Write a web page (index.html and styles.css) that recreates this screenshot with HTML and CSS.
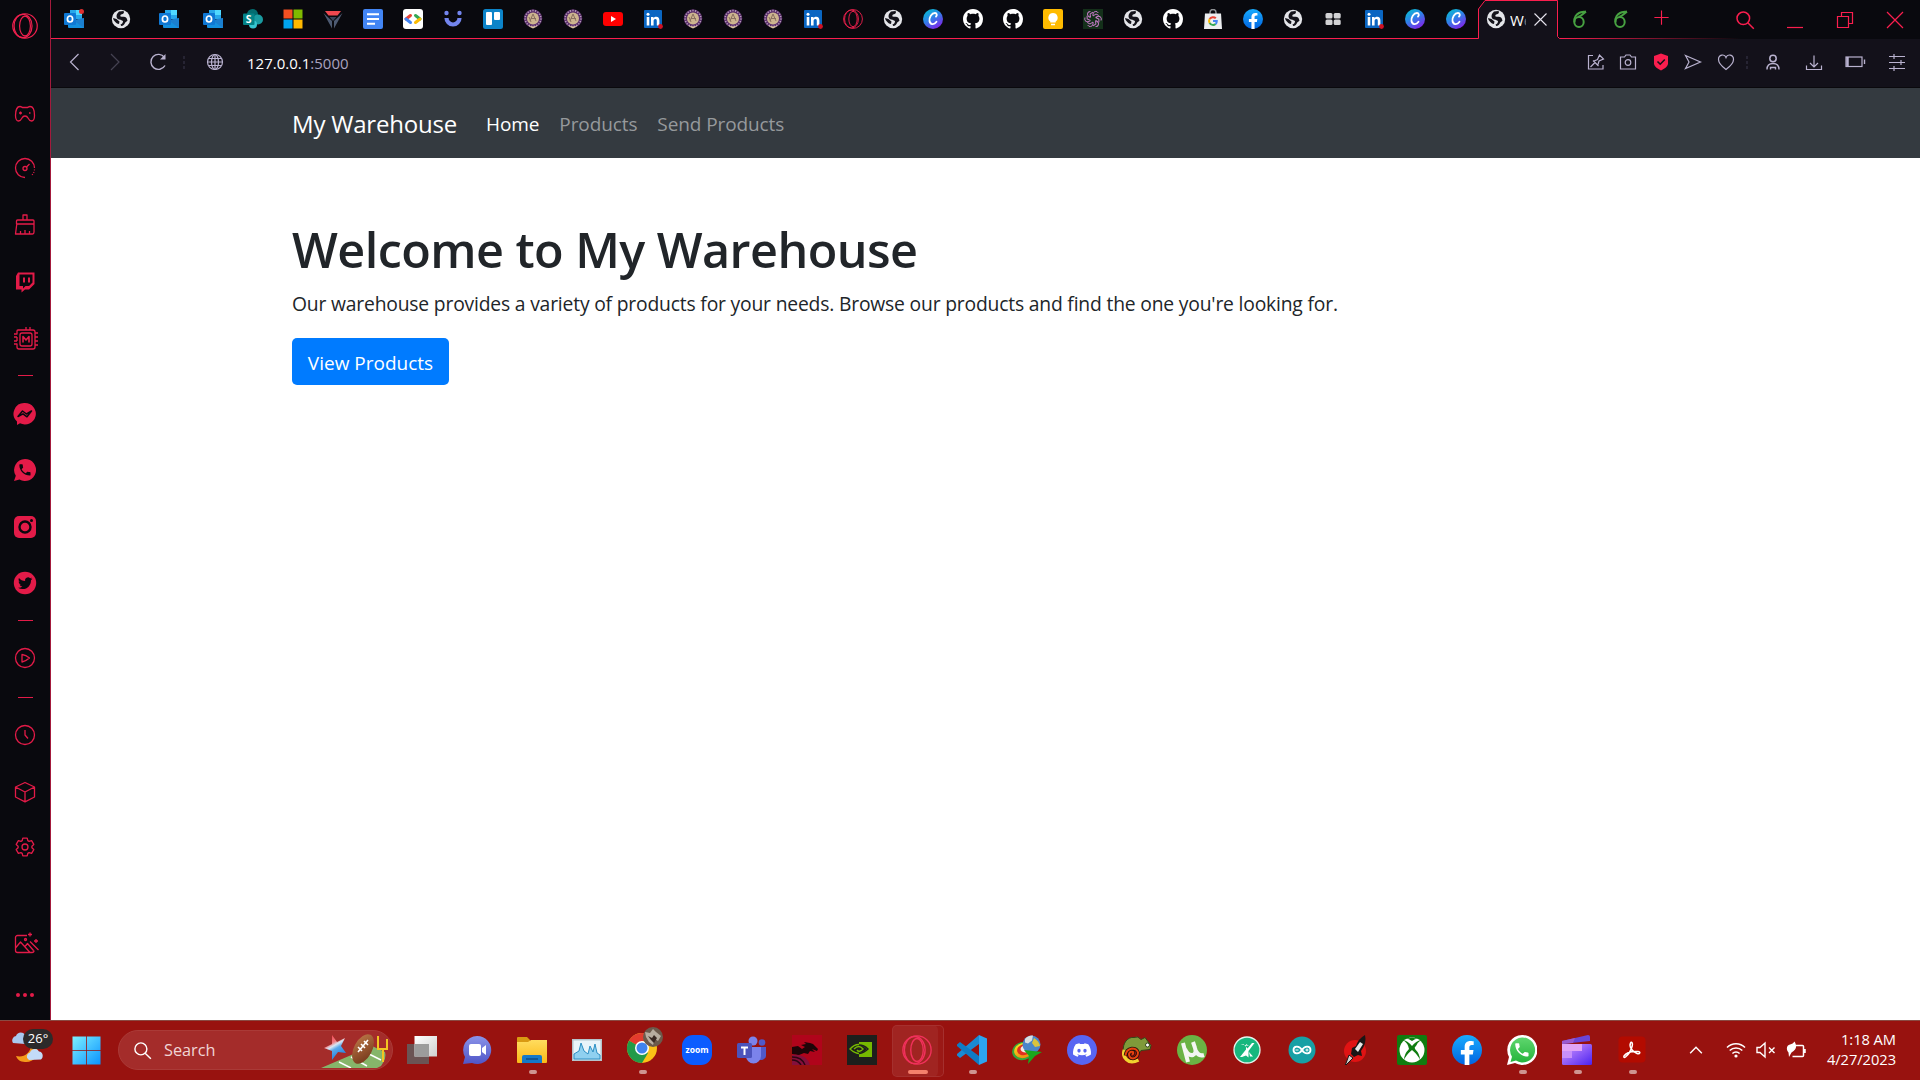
FILE: index.html
```html
<!DOCTYPE html>
<html lang="en">
<head>
<meta charset="utf-8">
<title>My Warehouse</title>
<link rel="stylesheet" href="styles.css">
</head>
<body>
<svg class="sprite" aria-hidden="true">
  <defs>
    <linearGradient id="g-canva" x1="0" y1="0" x2=".6" y2="1"><stop offset="0" stop-color="#00c9cc"/><stop offset=".5" stop-color="#2b86e8"/><stop offset="1" stop-color="#7a2be8"/></linearGradient>
    <linearGradient id="g-fb" x1="0" y1="0" x2="0" y2="1"><stop offset="0" stop-color="#18acfe"/><stop offset="1" stop-color="#0163e0"/></linearGradient>
    <linearGradient id="g-win" x1="0" y1="0" x2="1" y2="1"><stop offset="0" stop-color="#7df0ff"/><stop offset="1" stop-color="#0a93ff"/></linearGradient>
    <linearGradient id="g-chat" x1="0" y1="0" x2="0" y2="1"><stop offset="0" stop-color="#8a93e8"/><stop offset="1" stop-color="#4f55c8"/></linearGradient>
    <linearGradient id="g-fold" x1="0" y1="0" x2="0" y2="1"><stop offset="0" stop-color="#ffdc5e"/><stop offset="1" stop-color="#fbb917"/></linearGradient>
    <linearGradient id="g-view" x1="0" y1="0" x2="1" y2="1"><stop offset="0" stop-color="#fff"/><stop offset="1" stop-color="#cfcfcf"/></linearGradient>
    <linearGradient id="g-clip" x1="0" y1="0" x2="1" y2="1"><stop offset="0" stop-color="#d79bff"/><stop offset="1" stop-color="#4b22f0"/></linearGradient>
    <linearGradient id="g-wa" x1="0" y1="0" x2="0" y2="1"><stop offset="0" stop-color="#5fd66e"/><stop offset="1" stop-color="#25b43c"/></linearGradient>
    <linearGradient id="g-ball" x1="0" y1="0" x2="1" y2="1"><stop offset="0" stop-color="#c07a4a"/><stop offset="1" stop-color="#6e3316"/></linearGradient>
    <linearGradient id="g-star" x1="0" y1="0" x2=".5" y2="1"><stop offset="0" stop-color="#f0303c"/><stop offset=".4" stop-color="#f07a80"/><stop offset=".52" stop-color="#d8e6f2"/><stop offset=".65" stop-color="#5aa8ea"/><stop offset="1" stop-color="#2080e0"/></linearGradient>
    <linearGradient id="g-rain" x1="0" y1="0" x2="0" y2="1"><stop offset="0" stop-color="#f7e11c"/><stop offset="1" stop-color="#f08a12"/></linearGradient>
  </defs>

  <symbol id="outlook" viewBox="0 0 20 20"><path d="M6 1h12v9H6z" fill="#28a8ea"/><path d="M12 1h6v5h-6z" fill="#50d9ff"/><path d="M6 6h6v5H6z" fill="#0364b8"/><path d="M4 9l8 4 8-4v10H5a1 1 0 0 1-1-1z" fill="#1490df"/><path d="M20 9v10L9 11z" fill="#1b7fcf"/><rect y="4" width="12" height="12" rx="1" fill="#0f78d4"/><ellipse cx="6" cy="10" rx="2.600" ry="3" fill="none" stroke="#fff" stroke-width="1.700"/></symbol>
  <symbol id="world" viewBox="0 0 20 20"><circle cx="10" cy="10" r="9.200" fill="#e4e5e9"/><path d="M8 2.500l4.500-.5c1 1.500.3 3-1.500 3.300-1.500.3-2 1.200-1.500 2.200 1.500.5 4.500-.2 6 1.500l1 2.500c-.7 1.200-2 1.300-2.500 2.500-.5 1.500-1.800 3-3.800 3l-.7-1.500c1.700-.5 2.500-1.800 2.500-3.500l-2.500-1.200c-2-.3-3.800-1-4-3.300C5.500 5.500 6.500 4 8 2.500z" fill="#14131a"/><path d="M2 9l3.500 1 3 2.500-.5 2.500-2-.5C4.500 13 2.500 12 2 9z" fill="#14131a"/></symbol>
  <symbol id="sharepoint" viewBox="0 0 20 20"><circle cx="9.500" cy="5.500" r="5.500" fill="#036c70"/><circle cx="15" cy="10.500" r="5" fill="#1a9ba1"/><circle cx="10" cy="15.500" r="4" fill="#37c6d0"/><rect y="4.500" width="11.500" height="11.500" rx="1" fill="#038387"/><text x="5.700" y="14" text-anchor="middle" class="glyph" font-size="10.500" fill="#fff">S</text></symbol>
  <symbol id="microsoft" viewBox="0 0 20 20"><path d="M.5.500h9v9h-9z" fill="#f25022"/><path d="M10.500.500h9v9h-9z" fill="#7fba00"/><path d="M.5 10.500h9v9h-9z" fill="#00a4ef"/><path d="M10.500 10.500h9v9h-9z" fill="#ffb900"/></symbol>
  <symbol id="vee" viewBox="0 0 20 20"><path d="M2 2h16l-3.500 4.500h-9z" fill="#f0484f"/><path d="M.5 4l8.500 8v7.500zM19.500 4L11 12v7.500z" fill="#4d5a72"/><path d="M6.500 8h7L10 12z" fill="#39445a"/></symbol>
  <symbol id="docs" viewBox="0 0 20 20"><rect width="20" height="20" rx="2" fill="#4285f4"/><path d="M4 5.200h12M4 10h12M4 14.800h8" stroke="#fff" stroke-width="2"/></symbol>
  <symbol id="gdev" viewBox="0 0 20 20"><rect width="20" height="20" rx="3" fill="#fff"/><g fill="none" stroke-width="3" stroke-linecap="round"><path d="M7.500 6.500L3 10" stroke="#ea4335"/><path d="M3 10l4.500 3.500" stroke="#4285f4"/><path d="M12.500 6.500L17 10" stroke="#34a853"/><path d="M17 10l-4.500 3.500" stroke="#fbbc04"/></g></symbol>
  <symbol id="ucup" viewBox="0 0 20 20"><path d="M3.500 9a6.500 6.500 0 0 0 13 0" fill="none" stroke="#7385ee" stroke-width="4.200"/><circle cx="3.500" cy="4" r="2.200" fill="#7385ee"/><circle cx="16.500" cy="4" r="2.200" fill="#7385ee"/></symbol>
  <symbol id="trello" viewBox="0 0 20 20"><rect width="20" height="20" rx="2.500" fill="#0c84c9"/><rect x="3" y="3" width="6" height="13" rx="1" fill="#fff"/><rect x="11" y="3" width="6" height="8" rx="1" fill="#fff"/></symbol>
  <symbol id="seal" viewBox="0 0 20 20"><circle cx="10" cy="9.500" r="9.200" fill="#5b2f6c"/><circle cx="10" cy="9.500" r="7.900" fill="none" stroke="#b9a3bd" stroke-width="1.500" stroke-dasharray="1.200 1.400"/><circle cx="10" cy="9.500" r="6" fill="#cdb58f"/><path d="M7 12l3-7 3 7M8 9.500h5M6 8l2 5" fill="none" stroke="#8a7060"/><path d="M5 16q5 3 10 0l-2 2-3 1.500L7 18z" fill="#dcc79d"/></symbol>
  <symbol id="youtube" viewBox="0 0 20 20"><rect y="3" width="20" height="14" rx="3" fill="#f00"/><path d="M8 7v6l5-3z" fill="#fff"/></symbol>
  <symbol id="linkedin" viewBox="0 0 20 20"><rect x="1" y="1" width="18" height="18" rx="1" fill="#0a66c2"/><path d="M3.700 8h2.600v8.500H3.700zM8 8h2.500v1.200C11.200 8.200 12.200 7.800 13.200 7.800c2.300 0 3.200 1.400 3.200 3.900v4.800h-2.600V12c0-1.200-.3-2-1.400-2-1.200 0-1.800.8-1.800 2v4.500H8z" fill="#fff"/><circle cx="5" cy="5.200" r="1.500" fill="#fff"/><circle cx="17.500" cy="17.500" r="2.400" fill="#d11124"/></symbol>
  <symbol id="opera" viewBox="0 0 24 24"><g fill="none" stroke="#f0204e" stroke-width="1.100"><circle cx="12" cy="12" r="11.300"/><ellipse cx="10.200" cy="12" rx="8.300" ry="10.800"/><ellipse cx="12" cy="12" rx="5" ry="9.200"/></g></symbol>
  <symbol id="canva" viewBox="0 0 20 20"><circle cx="10" cy="10" r="10" fill="url(#g-canva)"/><path d="M13 7.500c1.500-1.500.8-3.500-1-3.500C8.500 4 6 8.500 6.500 12c.5 3.500 4.500 4.300 7 .8" fill="none" stroke="#fff" stroke-width="1.800" stroke-linecap="round"/></symbol>
  <symbol id="github" viewBox="0 0 16 16"><path fill="#fff" d="M8 0C3.580 0 0 3.580 0 8c0 3.540 2.290 6.530 5.470 7.590.4.070.55-.17.55-.38 0-.19-.01-.82-.01-1.490-2.010.37-2.530-.49-2.690-.94-.09-.23-.48-.94-.82-1.130-.28-.15-.68-.52-.01-.53.63-.01 1.080.58 1.230.82.72 1.210 1.870.87 2.330.66.07-.52.28-.87.51-1.070-1.780-.2-3.640-.89-3.640-3.950 0-.87.31-1.590.82-2.150-.08-.2-.36-1.020.08-2.120 0 0 .67-.21 2.200.82.64-.18 1.320-.27 2-.27.68 0 1.360.09 2 .27 1.530-1.040 2.200-.82 2.200-.82.44 1.100.16 1.920.08 2.120.51.56.82 1.270.82 2.150 0 3.070-1.870 3.750-3.650 3.950.29.25.54.73.54 1.480 0 1.070-.01 1.930-.01 2.200 0 .21.15.46.55.38A8.013 8.013 0 0 0 16 8c0-4.420-3.580-8-8-8z"/></symbol>
  <symbol id="keep" viewBox="0 0 20 20"><rect width="20" height="20" rx="2" fill="#fb0"/><path d="M10 4a4.700 4.700 0 0 0-2.700 8.500V13.500h5.400v-1A4.700 4.700 0 0 0 10 4zM8 14.700h4v1.500H8z" fill="#fff"/></symbol>
  <symbol id="gpt" viewBox="0 0 20 20"><path d="M0 0h20v20H0z" fill="#14301a"/><g fill="none" stroke="#c77bc9" stroke-width="1"><path id="petal" d="M10 7V5a2.800 2.800 0 0 1 5.300-1M10 7l3-2 2.800 1.500"/><use href="#petal" transform="rotate(60 10 10)"/><use href="#petal" transform="rotate(120 10 10)"/><use href="#petal" transform="rotate(180 10 10)"/><use href="#petal" transform="rotate(240 10 10)"/><use href="#petal" transform="rotate(300 10 10)"/></g></symbol>
  <symbol id="shop" viewBox="0 0 20 20"><path d="M7 5V3.500a3 3 0 0 1 6 0V5" fill="none" stroke="#8e9195" stroke-width="1.500"/><path d="M2 4.500h16l1 15.500H1z" fill="#eceef0"/><g fill="none" stroke-width="2"><path d="M12.800 9.300A4 4 0 0 0 6.600 10" stroke="#ea4335"/><path d="M6.600 10a4 4 0 0 0 0 4" stroke="#fbbc04"/><path d="M6.600 14a4 4 0 0 0 6 1" stroke="#34a853"/><path d="M12.600 15a4 4 0 0 0 1.200-3H10" stroke="#4285f4"/></g></symbol>
  <symbol id="facebook" viewBox="0 0 24 24"><circle cx="12" cy="12" r="12" fill="url(#g-fb)"/><path fill="#fff" d="M16.671 15.543l.532-3.470h-3.328v-2.250c0-.949.465-1.874 1.956-1.874h1.513V4.996s-1.374-.235-2.686-.235c-2.741 0-4.533 1.662-4.533 4.669v2.643H7.078v3.470h3.047V24h3.750v-8.457z"/></symbol>
  <symbol id="grid" viewBox="0 0 20 20"><g fill="#d2d2d4"><rect x="2.500" y="4" width="7" height="5.500" rx="1.500"/><rect x="10.700" y="4" width="7" height="5.500" rx="1.500"/><rect x="2.500" y="10.500" width="7" height="5.500" rx="1.500"/><rect x="10.700" y="10.500" width="7" height="5.500" rx="1.500"/></g></symbol>
  <symbol id="overleaf" viewBox="0 0 20 20"><g fill="none" stroke="#47a141" stroke-width="2"><ellipse cx="9" cy="13" rx="4.700" ry="5"/><path d="M4.500 13C3.500 8 7 5 9 4c2-1 4-1 7-1.500M8 8c3-1 5-3 8-5.500"/></g></symbol>

  <symbol id="pad" viewBox="0 0 24 24"><path d="M7 4.500c1.500 0 2 1 3 1h4c1 0 1.500-1 3-1 3 0 4.500 4 4.500 9 0 4-1.500 5.500-3 5.500s-2.500-1-3.500-3c-.7-1.400-1.500-2-3-2s-2.300.6-3 2c-1 2-2 3-3.500 3s-3-1.500-3-5.500c0-5 1.500-9 4.500-9z"/><path d="M6 11h3M7.500 9.500v3M16 11h1.500"/></symbol>
  <symbol id="speed" viewBox="0 0 24 24"><path d="M12 21.500A9.500 9.500 0 1 1 21.500 12"/><path d="M21.500 13.500c-.2 2-1 4-2.500 5.500" stroke-dasharray="1 1.500"/><circle cx="12" cy="12.500" r="2"/><path d="M13.500 11l3-3"/></symbol>
  <symbol id="broom" viewBox="0 0 24 24"><path d="M10 7V2h4v5M4.500 7h15.500a1 1 0 0 1 1 1v3H3.500V8a1 1 0 0 1 1-1zM3.800 11L2.500 21H19.500q1.500 0 1.500-2V11M7.500 21v-3M12 21v-4M16.500 21v-3"/></symbol>
  <symbol id="twitch" viewBox="0 0 24 24"><path class="solid" fill-rule="evenodd" d="M3 6l2-3.500h16.500V14L16 19.500h-4L8.500 22.500V19.500H3zM6.500 4.500V16H10v2.500L12.500 16H16l3.500-3.500v-8zM10 7.500h2v5h-2zM15 7.500h2v5h-2z"/></symbol>
  <symbol id="chip" viewBox="0 0 26 26"><path d="M5 4h15a2 2 0 0 1 2 2v15a2 2 0 0 1-2 2H6a2 2 0 0 1-2-2V18H1M4 15V11M1 8h3V5a1 1 0 0 1 1-1M1 11h3M13 4V1M17 4V1M22 7h3M22 11h3M22 15h3M22 19h3M1 15h3"/><rect x="7" y="7" width="12" height="13" rx="2"/><path d="M10 16.500v-6l3 3.500 3-3.500v6" stroke-width="1.600"/></symbol>
  <symbol id="messenger" viewBox="0 0 24 24"><path class="solid" d="M12 1a11 10.700 0 1 1-5 20.300L4 23v-3.500A10.700 10.700 0 0 1 12 1z"/><path class="cut" d="M5 14.500l4.500-5.500 4 3L18.500 9 14 14.800l-4-3z" stroke-width="1.500"/></symbol>
  <symbol id="whats" viewBox="0 0 24 24"><path class="solid" d="M12 1a11 11 0 1 1-5.500 20.500L1 23l1.800-5.200A11 11 0 0 1 12 1z"/><path class="cutfill" transform="translate(4.500 4.500) scale(.62)" d="M6.620 10.790c1.440 2.830 3.760 5.140 6.590 6.590l2.200-2.200c.27-.27.67-.36 1.020-.24 1.120.37 2.330.57 3.570.57.55 0 1 .45 1 1V20c0 .55-.45 1-1 1-9.390 0-17-7.610-17-17 0-.55.45-1 1-1h3.500c.55 0 1 .45 1 1 0 1.250.2 2.450.57 3.570.11.35.03.74-.25 1.020z"/></symbol>
  <symbol id="insta" viewBox="0 0 24 24"><rect class="solid" x="1" y="1" width="22" height="22" rx="5"/><circle class="cut" cx="12" cy="12" r="5.500" stroke-width="2.400"/><circle class="cutfill" cx="18.500" cy="5.500" r="1.500"/></symbol>
  <symbol id="twitter" viewBox="0 0 24 24"><circle class="solid" cx="12" cy="12" r="11.200"/><path class="cutfill" transform="translate(5 5) scale(.6)" d="M23.953 4.570a10 10 0 0 1-2.825.775 4.958 4.958 0 0 0 2.163-2.723c-.951.555-2.005.959-3.127 1.184a4.920 4.920 0 0 0-8.384 4.482C7.690 8.095 4.067 6.130 1.640 3.162a4.822 4.822 0 0 0-.666 2.475c0 1.710.87 3.213 2.188 4.096a4.904 4.904 0 0 1-2.228-.616v.06a4.923 4.923 0 0 0 3.946 4.827 4.996 4.996 0 0 1-2.212.085 4.936 4.936 0 0 0 4.604 3.417 9.867 9.867 0 0 1-6.102 2.105c-.39 0-.779-.023-1.170-.067a13.995 13.995 0 0 0 7.557 2.209c9.053 0 13.998-7.496 13.998-13.985 0-.21 0-.42-.015-.63A9.935 9.935 0 0 0 24 4.590z"/></symbol>
  <symbol id="play" viewBox="0 0 24 24"><circle cx="12" cy="12" r="9.500"/><path d="M9 8.500v7.500q4-1 7.500-4Q13 9 9 8.500z"/></symbol>
  <symbol id="clock" viewBox="0 0 24 24"><circle cx="12" cy="12" r="9.500"/><path d="M12 7v5l3 3.500"/></symbol>
  <symbol id="cube" viewBox="0 0 24 24"><path d="M12 2.500L21.500 7v10L12 21.800 2.500 17V7zM2.500 7l9.500 5 9.500-5M12 12v9.500"/></symbol>
  <symbol id="gear" viewBox="0 0 24 24"><path d="M9.200 5.600L9.800 3.100H14.200L14.800 5.600L16.100 6.400L18.600 5.650L20.800 9.450L18.900 11.200V12.800L20.800 14.550L18.600 18.350L16.100 17.600L14.800 18.400L14.200 20.900H9.800L9.200 18.400L7.900 17.600L5.400 18.350L3.200 14.550L5.100 12.800V11.200L3.200 9.450L5.400 5.650L7.900 6.400Z"/><circle cx="12" cy="12" r="3"/></symbol>
  <symbol id="wallpaper" viewBox="0 0 26 26"><path d="M14 4.500H4.500a2 2 0 0 0-2 2v13a2 2 0 0 0 2 2H19a2 2 0 0 0 2-2M2.500 17l5-6 9.500 10.500M12 15.500l2.500-3 6 7M17 10.500l8.500 8.500"/><circle cx="12.500" cy="8.500" r="1"/><path d="M17 1.500v4M15 3.500h4M23 8v4M21 10h4"/></symbol>
  <symbol id="dots" viewBox="0 0 24 24"><g class="solid"><circle cx="5" cy="12" r="2"/><circle cx="12" cy="12" r="2"/><circle cx="19" cy="12" r="2"/></g></symbol>

  <symbol id="back" viewBox="0 0 20 20"><path d="M13.500 2L5.500 10l8 8"/></symbol>
  <symbol id="fwd" viewBox="0 0 20 20"><path d="M6 2l8 8-8 8"/></symbol>
  <symbol id="reload" viewBox="0 0 20 20"><path d="M16.500 5.500A7.500 7.500 0 1 0 17 13.500" stroke-width="1.400"/><path class="solid" d="M17.500 2v5.500H12z"/></symbol>
  <symbol id="globe" viewBox="0 0 20 20"><circle cx="10" cy="10" r="7.500"/><ellipse cx="10" cy="10" rx="3.500" ry="7.500"/><path d="M10 2.500v15M3.500 6.500h13M3.500 13.500h13M2.500 10h15"/></symbol>
  <symbol id="pinedit" viewBox="0 0 20 20"><path d="M7 3.500H2.500v13.500H17V13M4.500 15l4.500-4.500M7 8.500l5.500 5.500M8 9l3.500-1.500L13.500 3l4 4-4.500 2-1 3.500"/></symbol>
  <symbol id="camera" viewBox="0 0 20 20"><path d="M2.500 5h4L8 3h4l1.500 2h4v12h-15z"/><circle cx="10" cy="10.500" r="2.800"/></symbol>
  <symbol id="shield" viewBox="0 0 20 20"><path d="M10 1.500l7 2.500v7.500c0 3-3.500 5-7 7-3.500-2-7-4-7-7V4z" fill="#fa1e4e" stroke="none"/><path d="M6.500 9.500l2.700 2.700 4.600-4.700" stroke="#13111a" stroke-width="1.600"/></symbol>
  <symbol id="send" viewBox="0 0 20 20"><path d="M2.500 3.500L17.500 10l-15 6.500L6 10z"/></symbol>
  <symbol id="heart" viewBox="0 0 20 20"><path d="M10 17.500C6 14.500 2.500 11.500 2.500 7.500c0-5 6-6 7.500-2 1.500-4 7.500-3 7.500 2 0 4-3.500 7-7.500 10z"/></symbol>
  <symbol id="user" viewBox="0 0 20 20"><circle cx="10" cy="6.500" r="3.200" stroke-width="1.500"/><path d="M4 17.500c0-4 2-6 6-6s6 2 6 6M7.500 17.500V15.500h5v2" stroke-width="1.400"/></symbol>
  <symbol id="download" viewBox="0 0 20 20"><path d="M10 3.500V15M6 11l4 4 4-4M2.500 13.500v4h15v-4"/></symbol>
  <symbol id="battery" viewBox="0 0 22 20"><rect x="2" y="5" width="16" height="9.500"/><path d="M3.500 5v9.500" stroke-width="2.500"/><path d="M20.500 7.500v4.500" stroke-width="1.400"/></symbol>
  <symbol id="sliders" viewBox="0 0 20 20"><path d="M2 4.500h16M2 10.500h16M2 16.500h16M7 2v5M14 8v5M7 14v5"/></symbol>
  <symbol id="plus" viewBox="0 0 20 20"><path d="M10 2.500v15M2.500 10h15"/></symbol>
  <symbol id="cross" viewBox="0 0 20 20"><path d="M2 2l16 16M18 2L2 18"/></symbol>
  <symbol id="search" viewBox="0 0 20 20"><circle cx="8.300" cy="8.300" r="6.300" stroke-width="1.500"/><path d="M12.800 12.800l6 6" stroke-width="1.500"/></symbol>
  <symbol id="minim" viewBox="0 0 20 20"><path d="M2 17.500h16"/></symbol>
  <symbol id="restore" viewBox="0 0 20 20"><path d="M2.500 6.500h11v11h-11zM6.500 6.500V2.500h11v11h-4"/></symbol>

  <symbol id="t-weather" viewBox="0 0 34 34"><path d="M1 14a4.500 4.500 0 0 1 3-7c1-4 7-5 9-1v9z" fill="#a9c8ef"/><path d="M25 20c3 6-4 14-12 13-5 0-8-3-9-6 8 2 14-3 15-10 3 0 5 1 6 3z" fill="#f59a1b"/><path d="M17 31a4 4 0 0 1 1-7.500c1-4 7-5 9-1 4 0 5 6 2 8z" fill="#c3dbf8"/></symbol>
  <symbol id="t-start" viewBox="0 0 30 30"><path d="M.5.500h14.200v14.200H.5zM15.500.500h14v14.200h-14zM.5 15.500h14.200v14H.5zM15.500 15.500h14v14h-14z" fill="url(#g-win)"/></symbol>
  <symbol id="t-game" viewBox="0 0 68 36"><path d="M0 36l42-18 9-4 13 6q2 6-4 14l-4 2z" fill="#86b56a"/><path d="M18 30l12 6M30 25l16 9M42 19l18 9" stroke="#fff" stroke-width="1.500"/><path d="M11 3l5 7 8-4-4 8 5 7-8-1-6 8v-9l-8-3 8-4z" fill="url(#g-star)"/><ellipse cx="42" cy="17" rx="9" ry="16" transform="rotate(28 42 17)" fill="url(#g-ball)"/><path d="M37 20l10-12M37 15l4 4M40 12l4 4M43 9l4 4" stroke="#fff" stroke-width="1.600"/><path d="M57 4v13h9V7M62 17v13" fill="none" stroke="#f2c522" stroke-width="2"/></symbol>
  <symbol id="t-view" viewBox="0 0 30 30"><path d="M0 9h22v20H0z" fill="#6b5454"/><path d="M7.500 1H30v20.500H7.500z" fill="url(#g-view)"/><path d="M7.500 9H22v12.500H7.500z" fill="#9c9c9c"/></symbol>
  <symbol id="t-chat" viewBox="0 0 30 30"><path d="M15 1a14 14 0 1 1-5 27L1 29l2-7A14 14 0 0 1 15 1z" fill="url(#g-chat)"/><rect x="7" y="9" width="12" height="12" rx="2" fill="#fff"/><path d="M20 13l4-3v10l-4-3z" fill="#fff"/></symbol>
  <symbol id="t-folder" viewBox="0 0 30 30"><path d="M0 3a1 1 0 0 1 1-1h9l3 3v6H0z" fill="#d99a12"/><path d="M0 7h11l3-2h16v22a1 1 0 0 1-1 1H1a1 1 0 0 1-1-1z" fill="url(#g-fold)"/><path d="M5 28v-6a2 2 0 0 1 2-2h16a2 2 0 0 1 2 2v6z" fill="#1479c9"/><path d="M9 24h12" stroke="#0b4b86" stroke-width="1.500"/></symbol>
  <symbol id="t-monitor" viewBox="0 0 30 30"><path d="M0 4h30v22H0z" fill="#b5c3cb"/><path d="M1.500 5.500h27v19h-27z" fill="#e9f4fa"/><path d="M2 19l5-3 2-8 3 8 4 3 2-8 3 6 2-8 2 9 3 2v4H2z" fill="#8fd0f0" stroke="#2c8fc4"/></symbol>
  <symbol id="t-chrome" viewBox="0 0 38 38"><circle cx="16" cy="21" r="15" fill="#fbc116"/><path d="M16 21L3 13.500A15 15 0 0 1 29 13.500z" fill="#e33b2e"/><path d="M16 21L3 13.500A15 15 0 0 0 16 36l6-10z" fill="#229a48"/><path d="M16 14h13.500L22 24z" fill="#fbc116"/><path d="M3 13.500h13v7z" fill="#e33b2e"/><circle cx="16" cy="21" r="7" fill="#fff"/><circle cx="16" cy="21" r="5.500" fill="#3f83ee"/><circle cx="27" cy="10" r="10" fill="#6c5a4c"/><path d="M19 5l5 1 3-4 3 3 5 4-3 5-3-2-2 6-4-3-3-5z" fill="#b8ada0"/><path d="M22 9l4 2 2-3 3 3-3 5-3-3z" fill="#3a2a24"/></symbol>
  <symbol id="t-zoom" viewBox="0 0 30 30"><rect width="30" height="30" rx="11" fill="#0b5cff"/><text x="15" y="18" text-anchor="middle" class="glyph" font-size="8.500" fill="#fff">zoom</text></symbol>
  <symbol id="t-teams" viewBox="0 0 30 30"><circle cx="16" cy="6" r="4.500" fill="#7b83eb"/><circle cx="25" cy="7.500" r="3.300" fill="#5059c9"/><path d="M19 12h10v9a5 5 0 0 1-8 3z" fill="#5059c9"/><path d="M9 12h15v9a7.500 7.500 0 0 1-15 0z" fill="#7b83eb"/><rect y="8" width="15" height="15" rx="1.500" fill="#4b53bc"/><path d="M4 12.500h7M7.500 12.500V20" stroke="#fff" stroke-width="2"/></symbol>
  <symbol id="t-dragon" viewBox="0 0 30 30"><path d="M0 0h30v30H0z" fill="#b0041b"/><path d="M0 12l6-1 4 3 3-2-4-2 5-1-2-2 6 1 3 1 5 5-1 2-5-2 3 3-5-1-2 3-4-1-5 2-7-1z" fill="#1d0508"/><path d="M0 20q14-2 18 10H0z" fill="#84103c"/><path d="M0 22q10 0 13 8M0 25q6 0 9 5" fill="none" stroke="#2a0612" stroke-width="1.500"/></symbol>
  <symbol id="t-nvidia" viewBox="0 0 30 30"><path d="M0 0h30v30H0z" fill="#1d1f1c"/><path d="M12 7h13v15H12z" fill="#76b900"/><path d="M3 14q8-9 18 0-8 9-18 0z" fill="#1d1f1c" stroke="#76b900" stroke-width="1.400"/><path d="M7 14q5-5 9 0-4 4-6 1" fill="none" stroke="#76b900" stroke-width="1.400"/><path d="M12 10q5 0 9 4-4 4-9 4.500" fill="none" stroke="#1d1f1c" stroke-width="1.400"/></symbol>
  <symbol id="t-vscode" viewBox="0 0 30 30"><path d="M22 0v9L3 23 0 20.500V19z" fill="#1b8ad3"/><path d="M22 30v-9L3 7 0 9.500V11z" fill="#0f7bc4"/><path d="M22 0l8 3.500v23L22 30z" fill="#2da5f0"/></symbol>
  <symbol id="t-idm" viewBox="0 0 30 30"><ellipse cx="11" cy="16" rx="11" ry="9" transform="rotate(-15 11 16)" fill="#35a83a"/><ellipse cx="11.500" cy="15.500" rx="9.500" ry="7.500" transform="rotate(-15 11.500 15.500)" fill="url(#g-rain)"/><ellipse cx="12.500" cy="14.500" rx="7.500" ry="5.500" transform="rotate(-15 12.500 14.500)" fill="#e0301e"/><ellipse cx="13.500" cy="14" rx="5" ry="3.500" fill="#f3e9e4"/><circle cx="19.500" cy="9.500" r="9" fill="#4a86c9"/><path d="M13 4q3-4 8-3.500l-1 5-4 3-3-1z" fill="#d9dfe0"/><path d="M22 3q5 3 6 8l-5 1-3-4z" fill="#dbc43c"/><path d="M12 15l18 2-7 4-7 8 1-8z" fill="#1aa81c"/></symbol>
  <symbol id="t-discord" viewBox="0 0 30 30"><circle cx="15" cy="15" r="15" fill="#5865f2"/><path transform="translate(6 6) scale(.75)" fill="#fff" d="M20.317 4.370a19.791 19.791 0 0 0-4.885-1.515.074.074 0 0 0-.079.037c-.211.375-.445.865-.608 1.250a18.300 18.300 0 0 0-5.487 0 12.600 12.600 0 0 0-.618-1.250.077.077 0 0 0-.079-.037A19.736 19.736 0 0 0 3.677 4.370C.533 9.046-.319 13.580.099 18.058a.082.082 0 0 0 .031.056 19.900 19.900 0 0 0 5.993 3.029.078.078 0 0 0 .084-.028c.462-.63.874-1.295 1.226-1.994a.076.076 0 0 0-.042-.106 13 13 0 0 1-1.872-.892l.364-.419c3.928 1.793 8.250 1.793 12.230 0l.366.420a12.300 12.300 0 0 1-1.873.891.077.077 0 0 0-.041.107c.36.698.772 1.363 1.225 1.993a.076.076 0 0 0 .084.029 19.800 19.800 0 0 0 6.033-3.085c.5-5.177-.838-9.674-3.549-13.660zM8.020 15.331c-1.183 0-2.157-1.086-2.157-2.419s.956-2.419 2.157-2.419 2.176 1.095 2.157 2.419c0 1.333-.956 2.419-2.157 2.419zm7.975 0c-1.183 0-2.157-1.086-2.157-2.419s.955-2.419 2.157-2.419 2.176 1.095 2.157 2.419c0 1.333-.946 2.419-2.157 2.419z"/></symbol>
  <symbol id="t-lizard" viewBox="0 0 30 30"><path d="M1.500 17C0 8 6 1.500 12 2.500q4-2 7 2l4-2 6 8-1 4-9 1-2 3-5-5z" fill="#7f9a3a" stroke="#35451a"/><path d="M2.500 15a8.500 8.500 0 0 0 2 9.500c3 3 8 2.500 12 .5" fill="none" stroke="#f2d22f" stroke-width="3.500"/><path d="M10 19.500q2-1 1-2.500-3-1-4 2 0 4 4 4.500 5-1 5-6-1-4-6-4-6 1-6.500 7" fill="none" stroke="#24120a" stroke-width="3.600"/><path d="M10 19.500q2-1 1-2.500-3-1-4 2 0 4 4 4.500 5-1 5-6-1-4-6-4-6 1-6.500 7" fill="none" stroke="#e8420f" stroke-width="2"/><circle cx="25.500" cy="10" r="2" fill="#fff" stroke="#35451a"/></symbol>
  <symbol id="t-utorrent" viewBox="0 0 30 30"><circle cx="15" cy="15" r="15" fill="#6ab344"/><path d="M6 8l5 19M8 14q3 7 8 6 4-2 2-7l-2-6M18 14q3 8 9 6" fill="none" stroke="#f4f6f2" stroke-width="4"/></symbol>
  <symbol id="t-swap" viewBox="0 0 30 30"><circle cx="15" cy="15" r="13" fill="#17b77e" stroke="#e4f5ee" stroke-width="1.300"/><path d="M8.500 9h3l4 4.500L20 8h2.500l-6 8v6.500l-2.500-2-4 1.500H8l6-7.500V9l3 2zM17 17l4 4.500h-3z" fill="#fff"/></symbol>
  <symbol id="t-arduino" viewBox="0 0 30 30"><circle cx="15" cy="15" r="13.500" fill="#17a0a5"/><path d="M15 15c-3-5-8.500-4-8.500 0s5.500 5 8.500 0 8.500-4 8.500 0-5.500 5-8.500 0z" fill="none" stroke="#fff" stroke-width="1.800"/><path d="M8.500 15h3M18.500 15h3M20 13.500v3" stroke="#fff"/></symbol>
  <symbol id="t-rocket" viewBox="0 0 30 30"><circle cx="13" cy="16" r="11" fill="#e01313"/><path d="M23 0q2 8-4 16l1 5-4-1-4 2-3-3 1-6 4-2Q16 4 23 0z" fill="#1a1616"/><path d="M18 7l3 2-5 8-3-3z" fill="#e8e8e8"/><path d="M7 20l4 3-8 8z" fill="#d7d2d0" stroke="#1a1616"/></symbol>
  <symbol id="t-xbox" viewBox="0 0 30 30"><rect width="30" height="30" rx="2" fill="#107c10"/><circle cx="15" cy="15" r="12.500" fill="#fff"/><path d="M9 3.500q3 0 6 2.500 3-2.500 6-2.500-3 0-6-1-3 1-6 1z" fill="#107c10"/><path d="M6 5q5 1 9 6 4-5 9-6-3 2-5 6-2 1-1 3 5 5 5 11-2-5-8-10-6 5-8 10 0-6 5-11Q11 8 6 5z" fill="#107c10"/></symbol>
  <symbol id="t-whatsapp" viewBox="0 0 30 30"><path d="M15 0a15 15 0 1 1-7 28L0 30l2-8A15 15 0 0 1 15 0z" fill="#fff"/><path d="M15 2.500A12.500 12.500 0 1 1 9 25.600l-5.500 1.300L5 21.700A12.500 12.500 0 0 1 15 2.500z" fill="url(#g-wa)"/><path transform="translate(6 6) scale(.74)" fill="#fff" d="M6.620 10.790c1.440 2.830 3.760 5.140 6.590 6.590l2.200-2.200c.27-.27.67-.36 1.020-.24 1.120.37 2.330.57 3.570.57.55 0 1 .45 1 1V20c0 .55-.45 1-1 1-9.390 0-17-7.610-17-17 0-.55.45-1 1-1h3.500c.55 0 1 .45 1 1 0 1.250.2 2.450.57 3.570.11.35.03.74-.25 1.020z"/></symbol>
  <symbol id="t-clip" viewBox="0 0 30 30"><path d="M0 6L26 0q2 0 2 2v4L0 9z" fill="#6a46d8"/><path d="M0 6l13-3-2 5-11 1z" fill="#9a5bd0"/><rect y="9" width="30" height="21" rx="1.500" fill="url(#g-clip)"/><path d="M0 9h20v7H0z" fill="#e0a4f7"/><path d="M0 16h10v7H0z" fill="#c890fa"/></symbol>
  <symbol id="t-acrobat" viewBox="0 0 30 30"><rect x="1.500" y="1.500" width="27" height="26" rx="4" fill="#b30b00"/><path d="M7 21c2.500-4 7-5 14-4.500 3 .3 2 3-1 2C15 17 12 11 13.500 8c1-2 2.500 0 1.700 3C14 15.500 11 20 8.500 22c-1.500 1-2 0-1.500-1z" fill="none" stroke="#fff" stroke-width="1.500"/></symbol>
  <symbol id="s-up" viewBox="0 0 20 20"><path d="M3.500 13.500L10 7l6.500 6.500" stroke-width="1.600"/></symbol>
  <symbol id="s-wifi" viewBox="0 0 20 20"><path d="M1 7.500a12.700 12.700 0 0 1 18 0M3.700 10.500a9 9 0 0 1 12.600 0M6.400 13.500a5 5 0 0 1 7.200 0" stroke-width="1.500"/><circle class="solid" cx="10" cy="16" r="1.600"/></symbol>
  <symbol id="s-mute" viewBox="0 0 20 20"><path d="M1 7.500h3L9 3v14l-5-4.500H1zM13 7.500l5.500 5.500M18.500 7.500L13 13" stroke-width="1.400"/></symbol>
  <symbol id="s-batt" viewBox="0 0 20 20"><path d="M10 5.500h6.500a1 1 0 0 1 1 1v9a1 1 0 0 1-1 1h-10M19 9v4" stroke-width="1.500"/><path class="solid" d="M8.500 1.500c2.500 4 2.500 8-3 11L3 17l-.5-4.500C-.5 9 1 5 4 4.500 6 4 7.500 3 8.500 1.500z"/></symbol>
</svg>

<div class="desktop">
  <div class="browser">
    <nav class="sidebar">
      <svg class="logo"><use href="#opera"/></svg><i></i>
      <svg><use href="#pad"/></svg>
      <svg><use href="#speed"/></svg>
      <svg><use href="#broom"/></svg>
      <svg><use href="#twitch"/></svg>
      <svg class="big"><use href="#chip"/></svg>
      <hr>
      <svg><use href="#messenger"/></svg>
      <svg><use href="#whats"/></svg>
      <svg><use href="#insta"/></svg>
      <svg><use href="#twitter"/></svg>
      <hr>
      <svg><use href="#play"/></svg>
      <hr>
      <svg><use href="#clock"/></svg>
      <svg><use href="#cube"/></svg>
      <svg><use href="#gear"/></svg><i></i>
      <svg class="big"><use href="#wallpaper"/></svg>
      <svg><use href="#dots"/></svg>
    </nav>

    <div class="window">
      <header class="tabs">
        <span class="tab w46 alert"><svg><use href="#outlook"/></svg></span>
        <span class="tab w48"><svg><use href="#world"/></svg></span>
        <span class="tab w48"><svg><use href="#outlook"/></svg></span>
        <span class="tab"><svg><use href="#outlook"/></svg></span>
        <span class="tab"><svg><use href="#sharepoint"/></svg></span>
        <span class="tab"><svg><use href="#microsoft"/></svg></span>
        <span class="tab"><svg><use href="#vee"/></svg></span>
        <span class="tab"><svg><use href="#docs"/></svg></span>
        <span class="tab"><svg><use href="#gdev"/></svg></span>
        <span class="tab"><svg><use href="#ucup"/></svg></span>
        <span class="tab"><svg><use href="#trello"/></svg></span>
        <span class="tab"><svg><use href="#seal"/></svg></span>
        <span class="tab"><svg><use href="#seal"/></svg></span>
        <span class="tab"><svg><use href="#youtube"/></svg></span>
        <span class="tab"><svg><use href="#linkedin"/></svg></span>
        <span class="tab"><svg><use href="#seal"/></svg></span>
        <span class="tab"><svg><use href="#seal"/></svg></span>
        <span class="tab"><svg><use href="#seal"/></svg></span>
        <span class="tab"><svg><use href="#linkedin"/></svg></span>
        <span class="tab"><svg><use href="#opera"/></svg></span>
        <span class="tab"><svg><use href="#world"/></svg></span>
        <span class="tab"><svg><use href="#canva"/></svg></span>
        <span class="tab"><svg><use href="#github"/></svg></span>
        <span class="tab"><svg><use href="#github"/></svg></span>
        <span class="tab"><svg><use href="#keep"/></svg></span>
        <span class="tab"><svg><use href="#gpt"/></svg></span>
        <span class="tab"><svg><use href="#world"/></svg></span>
        <span class="tab"><svg><use href="#github"/></svg></span>
        <span class="tab"><svg><use href="#shop"/></svg></span>
        <span class="tab"><svg><use href="#facebook"/></svg></span>
        <span class="tab"><svg><use href="#world"/></svg></span>
        <span class="tab"><svg><use href="#grid"/></svg></span>
        <span class="tab w41"><svg><use href="#linkedin"/></svg></span>
        <span class="tab w41"><svg><use href="#canva"/></svg></span>
        <span class="tab w41"><svg><use href="#canva"/></svg></span>
        <div class="active-tab">
          <svg class="edge" viewBox="0 0 83 39"><path d="M1 39V9L8 .5H80.500V36l2 2.500V39z" fill="#13111a"/><path d="M0 38.500h1.500V9L8 .5H80.500V36.500l2 2" fill="none" stroke="#fa1e4e"/></svg>
          <svg class="fav"><use href="#world"/></svg>
          <span class="tab-title">W<span>e</span></span>
          <svg class="close"><use href="#cross"/></svg>
        </div>
        <span class="tab after"><svg><use href="#overleaf"/></svg></span>
        <span class="tab after"><svg><use href="#overleaf"/></svg></span>
        <svg class="line new"><use href="#plus"/></svg>
        <div class="controls">
          <svg class="line"><use href="#search"/></svg>
          <svg class="line"><use href="#minim"/></svg>
          <svg class="line"><use href="#restore"/></svg>
          <svg class="line"><use href="#cross"/></svg>
        </div>
      </header>

      <div class="toolbar">
        <svg><use href="#back"/></svg>
        <svg class="dim"><use href="#fwd"/></svg>
        <svg class="reload"><use href="#reload"/></svg>
        <b class="grip"></b>
        <svg><use href="#globe"/></svg>
        <div class="address">127.0.0.1<span>:5000</span></div>
        <div class="actions">
          <svg><use href="#pinedit"/></svg>
          <svg><use href="#camera"/></svg>
          <svg><use href="#shield"/></svg>
          <svg><use href="#send"/></svg>
          <svg><use href="#heart"/></svg>
          <b class="grip"></b>
          <svg><use href="#user"/></svg>
          <svg><use href="#download"/></svg>
          <svg class="wide"><use href="#battery"/></svg>
          <svg><use href="#sliders"/></svg>
        </div>
      </div>

      <div class="page">
        <nav class="navbar">
          <a class="brand">My Warehouse</a>
          <a class="link current">Home</a>
          <a class="link">Products</a>
          <a class="link">Send Products</a>
        </nav>
        <main class="content">
          <h1>Welcome to My Warehouse</h1>
          <p>Our warehouse provides a variety of products for your needs. Browse our products and find the one you're looking for.</p>
          <a class="btn">View Products</a>
        </main>
      </div>
    </div>
  </div>

  <footer class="taskbar">
    <div class="weather"><svg><use href="#t-weather"/></svg><span>26°</span></div>
    <svg class="start"><use href="#t-start"/></svg>
    <div class="searchbox">
      <svg class="lens"><use href="#search"/></svg><span>Search</span><svg class="art"><use href="#t-game"/></svg>
    </div>
    <div class="apps">
      <span class="app"><svg><use href="#t-view"/></svg></span>
      <span class="app"><svg><use href="#t-chat"/></svg></span>
      <span class="app open"><svg><use href="#t-folder"/></svg></span>
      <span class="app"><svg><use href="#t-monitor"/></svg></span>
      <span class="app open"><svg class="badge"><use href="#t-chrome"/></svg></span>
      <span class="app"><svg><use href="#t-zoom"/></svg></span>
      <span class="app"><svg><use href="#t-teams"/></svg></span>
      <span class="app"><svg><use href="#t-dragon"/></svg></span>
      <span class="app"><svg><use href="#t-nvidia"/></svg></span>
      <span class="app focused"><svg><use href="#opera"/></svg></span>
      <span class="app open"><svg><use href="#t-vscode"/></svg></span>
      <span class="app"><svg><use href="#t-idm"/></svg></span>
      <span class="app"><svg><use href="#t-discord"/></svg></span>
      <span class="app"><svg><use href="#t-lizard"/></svg></span>
      <span class="app"><svg><use href="#t-utorrent"/></svg></span>
      <span class="app"><svg><use href="#t-swap"/></svg></span>
      <span class="app"><svg><use href="#t-arduino"/></svg></span>
      <span class="app"><svg><use href="#t-rocket"/></svg></span>
      <span class="app"><svg><use href="#t-xbox"/></svg></span>
      <span class="app"><svg><use href="#facebook"/></svg></span>
      <span class="app open"><svg><use href="#t-whatsapp"/></svg></span>
      <span class="app open"><svg><use href="#t-clip"/></svg></span>
      <span class="app open"><svg><use href="#t-acrobat"/></svg></span>
    </div>
    <div class="tray">
      <svg class="up"><use href="#s-up"/></svg>
      <svg><use href="#s-wifi"/></svg>
      <svg><use href="#s-mute"/></svg>
      <svg><use href="#s-batt"/></svg>
      <div class="clock"><div>1:18 AM</div><div>4/27/2023</div></div>
    </div>
  </footer>
</div>
</body>
</html>
```
FILE: styles.css
```css
* { box-sizing: border-box; }
body { margin: 0; background: #09090e; font-family: "Open Sans", "Noto Sans", sans-serif; overflow: hidden; }
.sprite { position: absolute; width: 0; height: 0; }
svg { display: block; flex: none; }
.glyph { font-family: "Open Sans", sans-serif; font-weight: 700; }
.solid { fill: currentColor; stroke: none; }
.cut { fill: none; stroke: #09090e; }
.cutfill { fill: #09090e; stroke: none; }

.desktop { width: 1920px; height: 1080px; display: flex; flex-direction: column; }
.browser { height: 1020px; display: flex; }

/* Opera GX side panel */
.sidebar {
  width: 50px; height: 1020px; display: grid; justify-items: center; align-items: center;
  grid-template-rows: 51px 35px 56px 52px 62px 52px 62px 11px 66px 46px 68px 44px 31px 44px 34px 41px 74px 36px 55px 48px 54px;
}
.sidebar svg { width: 24px; height: 24px; fill: none; stroke: #e31b48; stroke-width: 1.3; stroke-linejoin: round; color: #e31b48; }
.sidebar svg.logo, .sidebar svg.big { width: 26px; height: 26px; }
.sidebar svg.big { margin-left: 2px; }
.sidebar hr { width: 15px; height: 1px; margin: 0; border: 0; background: #e31b48; }

.window { flex: 1; border-left: 1px solid #a31a3c; background: #fff; }

/* tab strip */
.tabs {
  height: 39px; display: flex; align-items: center; background:
    linear-gradient(90deg, #fa1e4e 1510px, rgba(250, 30, 78, 0) 1690px) 0 38px / 100% 1px no-repeat, #09090e;
}
.tab { width: 40px; height: 39px; display: flex; align-items: center; justify-content: center; position: relative; }
.tab svg { width: 20px; height: 20px; margin-top: -1px; }
.w46 { width: 46px; }
.w48 { width: 48px; }
.w41 { width: 41px; }
.alert::after { content: ""; position: absolute; left: 28px; top: 9px; width: 5px; height: 5px; border-radius: 50%; background: #dc3030; }
.active-tab { width: 83px; height: 39px; display: flex; align-items: center; padding-left: 9px; position: relative; z-index: 1; margin-left: 1px; }
.active-tab .edge { position: absolute; left: 0; top: 0; width: 83px; height: 39px; z-index: -1; }
.fav { width: 20px; height: 20px; margin-top: -1px; }
.tab-title { width: 16px; margin-left: 4px; overflow: hidden; white-space: nowrap; color: #fff; font-size: 15px; line-height: 20px; }
.tab-title span { opacity: .4; }
.close { width: 15px; height: 15px; margin-left: 7px; fill: none; stroke: #e6e4ee; stroke-width: 1.5; }
.after { width: 41px; }
.after svg { margin-right: 1px; }
.line { fill: none; stroke: #fa1e4e; stroke-width: 1.2; }
.new { width: 19px; height: 19px; margin: -4px 0 0 10px; }
.controls { margin-left: auto; padding-right: 15px; display: flex; gap: 30px; }
.controls .line { width: 20px; height: 20px; }

/* address bar */
.toolbar { height: 49px; display: flex; align-items: center; padding: 0 13px 2px 14px; background: #13111a; border-bottom: 1px solid #0a090d; }
.toolbar svg { width: 20px; height: 20px; fill: none; stroke: #b9b2cf; stroke-width: 1.2; color: #b9b2cf; }
.toolbar > svg.dim { stroke: #454252; margin-left: 20px; }
.toolbar > svg.reload { margin-left: 23px; }
.toolbar > svg + .grip { margin: 0 20px 0 15px; }
.grip { width: 2px; height: 13px; background: repeating-linear-gradient(#262433 0 3px, transparent 3px 5px); }
.address { margin: 2px 0 0 22px; font-size: 15px; color: #fff; }
.address span { color: #a9a2bf; }
.actions { margin-left: auto; display: flex; align-items: center; }
.actions svg + svg { margin-left: 12.5px; }
.actions .grip { margin: 0 15px 0 10px; }
.actions .grip ~ svg + svg { margin-left: 20.7px; }
.actions svg.wide { width: 22px; }

/* warehouse page */
.navbar { height: 70px; background: #343a40; display: flex; align-items: center; padding: 0 0 0 241px; }
.brand { font-size: 24px; letter-spacing: -.2px; color: #fff; margin-right: 29px; }
.link { font-size: 19px; letter-spacing: -.1px; color: #96999c; margin-right: 20px; padding-top: 1px; }
.current { color: #fff; }
.content { padding: 61px 241px 0; color: #212529; }
h1 { margin: 0; font: 600 48.5px/60px "Open Sans", "Noto Sans", sans-serif; letter-spacing: -.55px; }
p { margin: 10px 0 19px; font-size: 19.3px; line-height: 30px; letter-spacing: -.18px; white-space: nowrap; }
.btn { display: inline-block; width: 157px; height: 47px; border-radius: 5px; background: #007bff; color: #fff; font-size: 19px; line-height: 50px; text-align: center; }

/* Windows taskbar */
.taskbar { height: 60px; display: flex; align-items: center; background: #98120f; border-top: 1px solid #8a4a43; color: #fff; }
.weather { width: 60px; height: 59px; position: relative; margin-right: 12px; padding: 8px 0 0 12px; }
.weather svg { width: 34px; height: 34px; }
.weather span { position: absolute; left: 23px; top: 8px; width: 30px; height: 20px; border-radius: 10px; background: #2c2a2a; font-size: 13px; line-height: 19px; text-align: center; }
.start { width: 29px; height: 29px; margin-top: -1px; }
.searchbox { width: 275px; height: 40px; margin: -1px 0 0 17px; padding-left: 14px; border-radius: 20px; background: #a42c2a; border: 1px solid #aa3a37; display: flex; align-items: center; overflow: hidden; }
.lens { width: 19px; height: 19px; fill: none; stroke: #fff; }
.searchbox span { margin-left: 12px; font-size: 16.3px; color: #f0d5d5; }
.art { width: 68px; height: 36px; margin-left: auto; margin-right: 3px; }
.apps { display: flex; margin-left: 1.5px; }
.app { width: 55px; height: 59px; display: flex; align-items: center; justify-content: center; position: relative; }
.app svg { width: 30px; height: 30px; margin-top: -1px; }
.app svg.badge { width: 38px; height: 38px; margin: -9px 0 0 6px; }
.open::after, .focused::after { content: ""; position: absolute; left: 24px; bottom: 6px; width: 8px; height: 4px; border-radius: 2px; background: #cf9490; }
.focused::after { left: 18px; width: 20px; background: #f5806c; }
.focused::before { content: ""; position: absolute; left: 2px; top: 4px; width: 50px; height: 50px; border-radius: 5px; background: rgba(255, 255, 255, .08); border: 1px solid rgba(255, 255, 255, .06); box-shadow: inset -6px 0 0 -1px rgba(152, 18, 15, .6); }
.tray { margin-left: auto; margin-right: 24px; display: flex; align-items: center; }
.tray svg { width: 20px; height: 20px; fill: none; stroke: #fff; color: #fff; margin: -1px 10px 0 0; }
.tray svg.up { width: 18px; height: 18px; margin-right: 21px; }
.clock { width: 80px; margin-top: -4px; text-align: right; font-size: 14.7px; line-height: 20px; letter-spacing: -.05px; }
```
